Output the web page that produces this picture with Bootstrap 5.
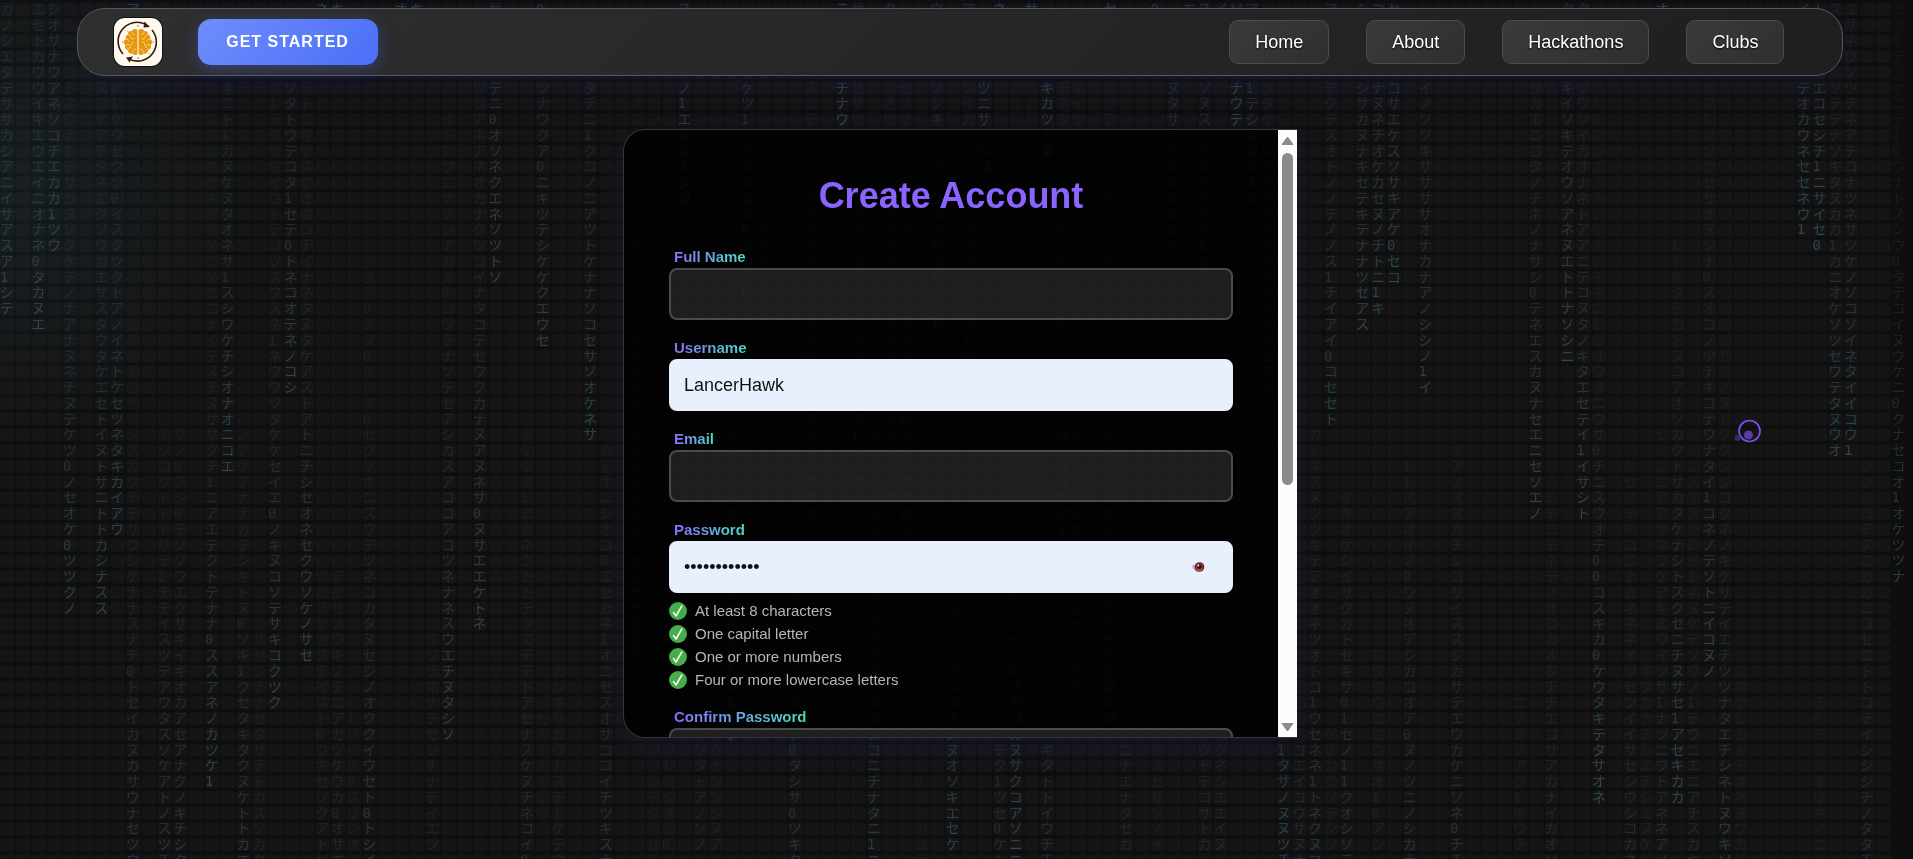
<!DOCTYPE html>
<html lang="en">
<head>
<meta charset="utf-8">
<meta name="viewport" content="width=device-width, initial-scale=1">
<title>Create Account</title>
<link rel="stylesheet" href="https://cdn.jsdelivr.net/npm/bootstrap@5.3.0/dist/css/bootstrap.min.css">
<style>
  body {
    background: #0e0e0e;
    color: #fff;
    font-family: "Liberation Sans", Arial, sans-serif;
    min-height: 100vh;
    overflow: hidden;
    padding: 8px 0 0 7px;
  }

  /* animated-code backdrop */
  .code-rain { inset: 0; width: 100%; height: 100%; z-index: -1; }
  .code-rain text { font-family: "DejaVu Sans Mono", "Noto Sans CJK JP", monospace; font-size: 14px; fill: url(#glyphTint); }
  .rain-glow {
    inset: 0; z-index: -1;
    background: radial-gradient(circle at 0 22%, rgba(50, 90, 110, .16), transparent 260px);
  }

  /* top bar */
  .top-bar {
    width: 92.7%;
    height: 68px;
    padding: 0 58px 0 36px;
    border: 1px solid #585a5a;
    border-radius: 28px;
    background: linear-gradient(135deg, rgba(48, 49, 49, .96), rgba(38, 39, 39, .96) 55%, rgba(31, 32, 32, .96));
    backdrop-filter: blur(12px);
    box-shadow: 0 8px 32px rgba(40, 40, 110, .26);
  }
  .brand-group { gap: 36px; }
  .brand-tile { width: 48px; height: 48px; border-radius: 11px; background: #fff9ef; box-shadow: 0 0 0 1px #111; }
  .btn-start {
    width: 180px; height: 46px;
    border: 0; border-radius: 13px;
    background: linear-gradient(135deg, #6f8dfb, #4a6ff8);
    box-shadow: 0 4px 15px rgba(74, 108, 247, .35);
    color: #fff; font-size: 16px; font-weight: 700; letter-spacing: 1px;
  }
  .btn-start:hover { color: #fff; background: #4a6ff8; }
  .bar-links { gap: 37px; }
  .bar-links a {
    height: 44px; padding: 0 25px;
    border: 1px solid #4a4b4b; border-radius: 9px;
    background: linear-gradient(135deg, #393a3a, #2e2f2f);
    color: #fff; font-size: 18px; text-shadow: 0 1px 2px #000;
  }

  /* sign-up panel */
  .signup-panel {
    max-width: 674px;
    height: calc(100vh - 250px);
    margin-top: 53px;
    border: 1px solid #35353b;
    border-right: 0;
    border-radius: 22px 0 0 22px;
    background: rgba(0, 0, 0, .84);
    box-shadow: 0 8px 32px rgba(40, 40, 110, .26);
    overflow: hidden;
  }
  .signup-scroll { padding: 39px 45px; overflow-y: auto; scrollbar-width: none; }
  .signup-scroll::-webkit-scrollbar { display: none; }
  .signup-title { font-size: 36px; line-height: 54px; font-weight: 700; color: #8b63ff; margin-bottom: 24px; }

  .field-group { margin-bottom: 18px; }
  .field-group label {
    width: fit-content;
    margin: 0 0 1px 5px;
    font-size: 15px; line-height: 20px; font-weight: 700;
    background: linear-gradient(90deg, #8a6cff, #4cdcc0);
    -webkit-background-clip: text; background-clip: text; color: transparent;
  }
  .field-box, .field-box:focus {
    height: 52px; padding: 0 13px;
    border: 2px solid #4b4b4b; border-radius: 8px;
    background: rgba(255, 255, 255, .11);
    color: #fff; font-size: 18px; box-shadow: none;
  }
  .field-box.filled { background: #e8f0fe; border-color: #e8f0fe; color: #111; }
  .peek-btn { right: 26px; top: 18px; width: 16px; height: 16px; padding: 0; border: 0; background: none; line-height: 0; }

  .rule-list { margin-top: 9px; font-size: 15px; line-height: 18px; color: #b6b6b6; }
  .rule-list li { gap: 8px; margin-bottom: 5px; }

  /* drawn scrollbar */
  .rail { width: 19px; background: #fcfcfc; padding: 6px 0 5px; }
  .rail-track { width: 11px; margin: 7px 0; }
  .rail-thumb { height: 59%; border-radius: 6px; background: #8b8b8b; }

  /* pointer trail */
  .pointer-trail { left: 90.6%; top: 48.7%; pointer-events: none; }
</style>
</head>
<body>

<svg class="code-rain position-fixed" id="rain" viewBox="0 0 1943 872" preserveAspectRatio="xMinYMin slice" aria-hidden="true">
  <defs>
    <linearGradient id="glyphTint" gradientUnits="userSpaceOnUse" x1="0" y1="2" x2="0" y2="18" spreadMethod="repeat">
      <stop offset="0.1" stop-color="#5868b0"/>
      <stop offset="0.9" stop-color="#40b494"/>
    </linearGradient>
    <pattern id="cells" width="16" height="16" patternUnits="userSpaceOnUse" y="2">
      <rect x="0" y="1" width="15" height="13" rx="3" fill="#151515"/>
    </pattern>
  </defs>
  <rect width="1920" height="2000" fill="url(#cells)"/>
</svg>
<div class="rain-glow position-fixed"></div>

<nav class="top-bar mx-auto d-flex align-items-center justify-content-between">
  <div class="brand-group d-flex align-items-center">
    <a href="#" class="brand-tile d-block" aria-label="Home page">
      <svg width="48" height="48" viewBox="0 0 48 48" fill="none">
        <g stroke="#3a1d0a" stroke-width="1.6">
          <path d="M9 36A19 19 0 0 1 31 6"/>
          <path d="M38 12A19 19 0 0 1 17 42"/>
        </g>
        <path d="M30.500 3.500L36 9l-6.500 0.500zM12 39.500l7-1-3.500 6z" fill="#3a1d0a"/>
        <path d="M24 7v2M24 39v2M8 24h1.500M38.500 24H40M13 12.500l1 1M34.500 35l1 1" stroke="#6b5a48" stroke-width=".8"/>
        <path d="M23.400 12c-2-2-5-.8-5.600 1-2.600-.2-4 1.700-3.800 3.500-2.200.8-2.800 3-2 4.600-2.600 1.300-2.600 4.500-.8 6-.8 2.500.6 4.600 2.600 5.200.2 2.600 2.600 3.800 4.400 3.300 1.400 1.800 4 1.800 5.200.2zM24.600 12c2-2 5-.8 5.600 1 2.600-.2 4 1.700 3.800 3.500 2.200.8 2.800 3 2 4.600 2.600 1.300 2.600 4.500.8 6 .8 2.500-.6 4.600-2.600 5.200-.2 2.600-2.600 3.800-4.400 3.300-1.400 1.800-4 1.800-5.200.2z" fill="#e8960c"/>
        <path d="M18 13.500c0 2 1 3 3 3M14 17c2-.5 3 1 3 2.500s2 2 3.500 1M12 21.500c1.500-.5 3 .5 3.500 2M11.500 27.500c2-1.500 4-1 5.500.5M20 24c-2 0-3 1.500-2.500 3.500M14 32c0-2 1.500-3 3-2.500M19 35c-.5-2 .5-4 3-4M30 13.500c0 2-1 3-3 3M34 17c-2-.5-3 1-3 2.500s-2 2-3.500 1M36 21.500c-1.500-.5-3 .5-3.500 2M36.500 27.500c-2-1.500-4-1-5.500.5M28 24c2 0 3 1.500 2.500 3.500M34 32c0-2-1.500-3-3-2.500M29 35c.5-2-.5-4-3-4" stroke="#fbdca2" stroke-width=".8"/>
      </svg>
    </a>
    <button type="button" class="btn btn-start p-0">GET STARTED</button>
  </div>
  <div class="bar-links d-flex">
    <a href="#" class="d-flex align-items-center text-decoration-none">Home</a>
    <a href="#" class="d-flex align-items-center text-decoration-none">About</a>
    <a href="#" class="d-flex align-items-center text-decoration-none">Hackathons</a>
    <a href="#" class="d-flex align-items-center text-decoration-none">Clubs</a>
  </div>
</nav>

<main class="signup-panel mx-auto d-flex">
  <form class="signup-scroll flex-grow-1" autocomplete="off">
    <h1 class="signup-title text-center">Create Account</h1>
    <div class="field-group">
      <label class="d-block" for="fullName">Full Name</label>
      <input class="form-control field-box" id="fullName" type="text">
    </div>
    <div class="field-group">
      <label class="d-block" for="userName">Username</label>
      <input class="form-control field-box filled" id="userName" type="text" value="LancerHawk">
    </div>
    <div class="field-group">
      <label class="d-block" for="email">Email</label>
      <input class="form-control field-box" id="email" type="email">
    </div>
    <div class="field-group">
      <label class="d-block" for="password">Password</label>
      <div class="position-relative">
        <input class="form-control field-box filled" id="password" type="password" value="LancerHawk12">
        <button type="button" class="peek-btn position-absolute" aria-label="Show password">
          <svg width="16" height="16" viewBox="0 0 16 16">
            <ellipse cx="8" cy="8" rx="7" ry="5" fill="#f4eef2"/>
            <path d="M1.300 6.500C1 10 4 13 9 13 5 12 3 9 3.500 5z" fill="#b9a6d8"/>
            <circle cx="8.500" cy="8" r="4.800" fill="#6e1f2c"/>
            <path d="M4.800 10a4.500 4.500 0 0 0 7.600 0c-2 1-5.500 1-7.600 0z" fill="#d0623c"/>
            <circle cx="8.500" cy="8" r="3.200" fill="#a04434"/>
            <circle cx="8.500" cy="7.800" r="2.200" fill="#241024"/>
            <circle cx="7.300" cy="6.500" r="1" fill="#f3dfe4"/>
          </svg>
        </button>
      </div>
      <ul class="rule-list list-unstyled mb-0" id="rules">
        <li class="d-flex">At least 8 characters</li>
        <li class="d-flex">One capital letter</li>
        <li class="d-flex">One or more numbers</li>
        <li class="d-flex">Four or more lowercase letters</li>
      </ul>
    </div>
    <div class="field-group">
      <label class="d-block" for="confirm">Confirm Password</label>
      <input class="form-control field-box" id="confirm" type="password">
    </div>
  </form>
  <div class="rail d-flex flex-column align-items-center flex-shrink-0" aria-hidden="true">
    <svg width="13" height="10" viewBox="0 0 13 10"><path d="M6.500 1L12 8.500H1z" fill="#8b8b8b" stroke="#8b8b8b" stroke-linejoin="round"/></svg>
    <div class="rail-track flex-grow-1"><div class="rail-thumb"></div></div>
    <svg width="13" height="10" viewBox="0 0 13 10"><path d="M6.500 9L12 1.500H1z" fill="#8b8b8b" stroke="#8b8b8b" stroke-linejoin="round"/></svg>
  </div>
</main>

<svg class="pointer-trail position-fixed" width="32" height="30" viewBox="0 0 32 30" aria-hidden="true">
  <circle cx="16.500" cy="13" r="10.500" fill="none" stroke="#7c50f5" stroke-width="1.700"/>
  <circle cx="15.500" cy="17" r="4.500" fill="#583d9c"/>
  <circle cx="4.500" cy="20" r="3" fill="#3b2a66"/>
</svg>

<script src="https://cdn.jsdelivr.net/npm/bootstrap@5.3.0/dist/js/bootstrap.bundle.min.js"></script>
<script>
  // Falling columns: [column, first row, glyphs, brightness of the last glyph]
  const drops = [
    [0,0,"カノシエタテササカシアニイサアスア1シテ",.4],[2,0,"エセトカウウイキエウエイニオナネ0タカヌエ",.4],[3,0,"シオサナウアネソコチエカカ1ツウ",.4],
    [4,5,"トネウナ1テサカヌソタケテノナアナヌネチヌテケツ0ノセオケ0ツツクノ",.4],
    [6,5,"スコケアチタネエクソウカエサスタウタケエセトイヌトサニトトカシナスス",.4],
    [7,5,"01ケウセクツ0イスクツクトアノイネトケセツネタキカイアウ",.4],
    [8,0,"ア",.4],[20,0,"ネ",.4],[21,0,"キ",.4],[25,0,"オ",.4],[26,0,"キ",.4],[31,0,"サ",.2],[34,0,"0",.3],[43,0,"ス",.3],[53,0,"テ",.4],[54,0,"サ",.2],[56,0,"ク",.2],[59,0,"ウ",.2],
    [61,0,"ア",.2],[63,0,"ネ",.4],[65,0,"サ",.4],[70,0,"セ",.4],[73,0,"0",.3],[75,0,"エ",.3],[76,0,"ス",.3],[77,0,"イ",.3],[78,0,"ソ",.3],[79,0,"ア",.2],[84,0,"ア",.2],[86,0,"シ",.3],[87,0,"コ",.3],[88,0,"セ",.3],[99,0,"ク",.2],[100,0,"タ",.2],[105,0,"オ",.4],[114,0,"イ",.3],[115,0,"ト",.3],[116,0,"ス",.1],
    [8,20,"ニテキアカサツソスカクチテサウシケナナスナチ0トセイカヌカサウナセツウ",.3],
    [10,27,"テツコクトトトサテ1チチイスツテアウタスソケアトノスツチ",.3],
    [11,27,"サノ0スシ0テソソウエクサキイキオカアセアナクノキチシク",.3],
    [13,7,"ニクオカケキツイノニヌセコナイテヌチヌサ",.12],[13,27,"サクチ1ニアエテクトテナナ0ススアネノカツケ1",.4],
    [14,5,"ネニト1カヌケヌタオネサ1スシウケチシオナオニコエ",.4],
    [15,27,"ノアケテナナカテシキトヌ0ソキ1クセタキタクヌケトトカエ",.3],[16,40,"サセシナナセタサテトカスソカク",.14],
    [17,5,"ツ1テクツキイウトテコツスウスネ1ネウウツタケケセイエ0ノキヌコソテサキコクツク",.4],
    [18,5,"ソタトウテコタ1セテ0トネコオテネノコシ",.4],
    [19,5,"テトニキケスクオタコチイナネタヌタケアストアトニチシセオネセクウソケノサセ",.4],
    [20,36,"ツカスケカヌチイスト0クキセソクアトソ",.14],[21,36,"テケサノウキノチニアカツケウカ0オサエ",.18],[22,45,"1ソイア0スウシオ",.09],
    [23,16,"テヌテ0チヌ0キツイ0セクソキニスウテツネコカタヌセシノオククイウセト0トシイ",.34],
    [27,40,"エウナネナテセシチナテイエツ",.13],
    [28,7,"イト1ウニナケシアカエ0コツテナソテセアシカスアココアコツネナネスウエチヌタシソ",.38],
    [30,5,"ツコアネアネオカナクツコイナタコテセウクカナヌアヌネサ0ヌサエエケトネ",.4],
    [31,5,"テニ0オソネクエネソツトソ",.4],[34,5,"ツナウクア0ニキツテシケケクエウセ",.36],
    [37,5,"タチニ1クコノニアツトケナナソコセサソオケネサ",.4],
    [33,27,"スケウス1ニカネクトトチツエテテトアセナスケヌチネコイ0",.22],[35,42,"カンキソカウトステトケテウ",.14],[34,45,"セアテアキニウ",.06],
    [38,28,"カテオニシオコ0エセカネ1オニセスオサココイチツキスナ",.27],[41,49,"シテクオセ",.07],[42,48,"1アシヌケ0",.08],
    [40,5,"ノオスタクヌサウスノオセヌケコソサタチ0ノコスケセネシタ1ソセシチチタエチ",.25],
    [43,5,"ノ1エヌ0ナヌツ",.4],[47,5,"ケツ1ウツニツタネ0タカシ0",.36],[48,8,"0ノスコ0コケカイセ",.12],
    [51,5,"スニチネエウトイエコウイ0シウ1ニウタスコチヌトシエサソ",.3],[53,5,"チナウ",.4],
    [54,5,"ササツト1アスナキサソウチオ11オノヌナコテ1ヌナア",.3],[56,5,"ツオツ0ケサツネナナイツケツチソノコタノスケクアイナオ",.24],
    [57,5,"セソサケノカスカスキノ1ウケニソカトスサスセヌコソウセセニ",.24],[59,5,"ソシキテイサニクヌタカウキシツト",.3],
    [46,27,"1ツ1ウスクテコタノヌソスク11ツ1ニケ",.36],[44,47,"ソタトアノソノ",.15],[45,47,"クイツツシヌア",.12],
    [50,27,"1ネスシ1アソテウチ0スキトタテクスソテ0タシサ0ツキク",.28],[55,27,"ネカスナトスヌノアソテニキサタクノエヌヌコニチナタニ1ニ",.34],[58,48,"シ0コテカコナ",.06],
    [60,38,"ネテクケコシスオヌヌオソキエセケ",.38],
    [61,5,"ツイカ0テト0カシネヌツヌネタストサクキ",.2],[62,5,"ツニサノシコ",.34],[66,5,"キカツトヌ",.4],[67,5,"チネタカセクスナコ0エネスオソイ",.12],
    [68,5,"キイケアエソセチソテナエネチスエ",.09],[70,5,"ソツアネセコノセタエサ0ク1",.1],
    [74,5,"ヌタサナエシネ0シシア",.3],[76,5,"ソヌスセエタサテイネ1ケセタ",.3],[78,5,"ナウテ",.4],[79,5,"1テシネウチナア",.34],[80,5,"ツタケノキチアタオノケクイサヌノツセコス",.24],
    [63,47,"テク1ツセ0ケシ",.22],[64,37,"ノコウイソ0オアコカヌサクコアソニニ",.42],[66,47,"キタトトイウチチ",.24],[71,47,"ニナエナタセカ",.16],[73,47,"キスセサツノイ",.1],[76,47,"クトテコサトカ",.16],[77,47,"クネシエエイヌ",.16],
    [67,27,"スチタスツアイ",.3],[68,27,"テカトイタソニ",.24],[68,38,"キイエノクタ",.2],[70,27,"ネエノノツサ1アサ",.2],[70,38,"ウナセトオヌナソ",.28],
    [81,47,"1タサノヌヌツチ",.4],[82,47,"コエイコウサヌナ",.2],[83,27,"カテネスヌツツキテアオオネツオトコ1ウセネネ1トネクヌコ",.3],
    [84,46,"ケチカクソテシツ",.1],[85,31,"イキオケシイサクカトセキサ01セノ11クオシソテ",.28],[87,41,"1タクウコニコサオ10アシ",.13],[89,29,"11スアオイノ0ウヌオアシカコオア0ヌノツニノシカナ",.27],
    [84,5,"チクテスオトノノテノノス1チイアイ0コセセト",.34],[86,5,"シサカヌナキセテキテナナツセアス",.38],[87,5,"ナヌネチオケカセヌノチトニ1キ",.38],[88,5,"コサエケスソサキアケ0セコ",.4],
    [90,5,"イノソソキササササオナカナアノシシノ1イ",.36],
    [92,28,"キアノススカチシコサイススシカサテエウカケニソネ0チチ",.28],[96,44,"ニテヌノアク1キウテ",.09],
    [97,5,"サカエニコタノチネノナサシ0テネエスカヌナセエニセソエノ",.4],[98,31,"1テニテネテノオコカオタチチエコサアカナイカオソ",.2],
    [99,5,"キイソキテオウソアネヌエトトナソシニ",.42],[100,5,"ツウソイカオナネトアアニテコヌタノキタエセテイ1イサシト",.4],
    [101,6,"10ニシエアトノケト0テネニ1ツオウヌニウ",.1],[101,27,"サ0チニスウオテ00コスキカ0ケウタキテタサオネ",.45],
    [103,29,"ケセクテ0コニナカネネネオツセツイイサセシウシコカネ",.22],[104,42,"キタカナテシエチシエヌケ",.12],
    [105,27,"セツニニアアサネウケアキエウイツサ1ナツニウトアネネアノ",.24],[106,15,"1トネタテカトヌコアオソカクトサカタケナシトスクセニチヌサセ1アセキカカ",.42],
    [107,27,"0イニスオスツ0イトネヌケテソウノ1テウニエニアチスカキ",.2],
    [108,5,"ケク1ソソツセサオヌツナ0スオコノツチキコナウナタイ1コネノテソトニイコヌノ",.4],
    [109,19,"シオオサツノヌトツクシシコクネノキケサテイエチツツナタエチシネトヌウキソ",.36],[110,42,"エネケ1カトチオネヌウカ",.1],
    [114,5,"テオカウネセセネウ1",.42],[115,5,"エコセシチ1ニサイセ0",.42],[115,44,"チ0テソツオウネノニ",.09],
    [116,5,"ソテテナソキタヌカカ1カニオケソツセウテタヌウオ",.38],[117,0,"エサネウソツチネアチコナツネサツケノソコソイネタイイコウ1",.4],
    [118,29,"ツシノコチヌニカカニコセニトトコテイシシシチノタタチ",.24],[120,0,"エネ0テノケニチ10ウナトスシウ0タテコイヌウケニ0クナセコオ1オケツツナ",.4]
  ];
  const NS = "http://www.w3.org/2000/svg", CELL = 16, FADE = .95;
  const rain = document.getElementById("rain");
  for (const [col, row, glyphs, head] of drops) {
    const line = document.createElementNS(NS, "text");
    [...glyphs].forEach((g, i) => {
      const span = document.createElementNS(NS, "tspan");
      span.setAttribute("x", col * CELL);
      span.setAttribute("y", (row + i) * CELL + 14);
      span.setAttribute("fill-opacity", (head * FADE ** (glyphs.length - 1 - i)).toFixed(3));
      span.textContent = g;
      line.append(span);
    });
    rain.append(line);
  }

  // Tick badge in front of each satisfied password rule
  for (const rule of document.querySelectorAll("#rules li")) {
    rule.insertAdjacentHTML("afterbegin",
      '<svg width="18" height="18" viewBox="0 0 18 18" aria-hidden="true"><circle cx="9" cy="9" r="9" fill="#45ad4a"/>' +
      '<path d="M4.500 10.500l2.500 3.500L12.800 4" fill="none" stroke="#fff" stroke-width="1.500" stroke-linecap="round" stroke-linejoin="round"/></svg>');
  }
</script>
</body>
</html>
